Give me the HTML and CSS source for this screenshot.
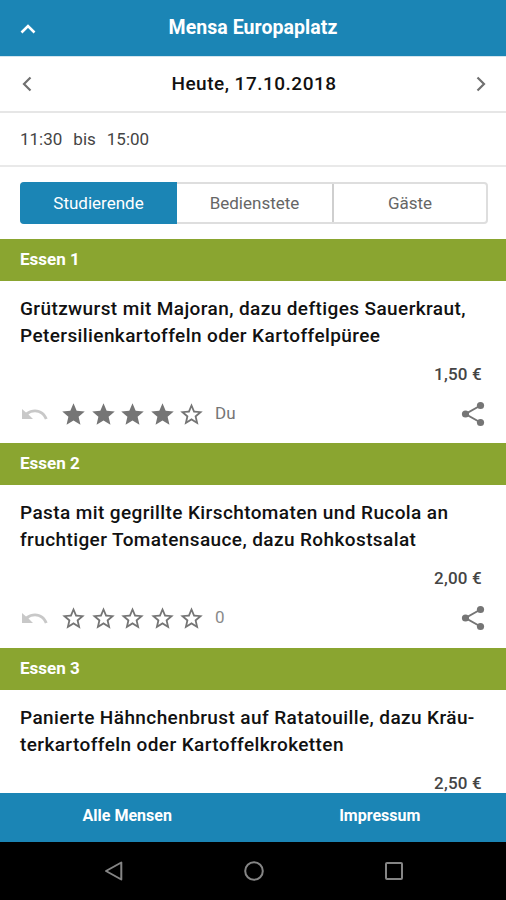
FILE: index.html
```html
<!DOCTYPE html>
<html lang="de">
<head>
<meta charset="utf-8">
<title>Mensa Europaplatz</title>
<link rel="stylesheet" href="styles.css">
</head>
<body>
<svg class="defs" aria-hidden="true">
  <symbol id="star" viewBox="0 0 24 24"><path d="M12 17.27L18.18 21l-1.64-7.03L22 9.24l-7.19-.61L12 2 9.19 8.63 2 9.24l5.46 4.73L5.82 21z"/></symbol>
  <symbol id="star-outline" viewBox="0 0 24 24"><path d="M22 9.24l-7.19-.62L12 2 9.19 8.63 2 9.24l5.46 4.73L5.82 21 12 17.27 18.18 21l-1.63-7.03L22 9.24zM12 15.4l-3.76 2.27 1-4.28-3.32-2.88 4.38-.38L12 6.1l1.71 4.04 4.38.38-3.32 2.88 1 4.28L12 15.4z"/></symbol>
  <symbol id="undo" viewBox="0 0 26 11"><path d="M0 0l4 3.4C6.800 1.300 10 .4 13 .4c6 0 10.600 3.700 12.600 9.200l-2.700 .9C21.300 6.300 17.600 3.300 13 3.300c-2.600 0-4.700 .8-6.500 2.200L11 10H0z"/></symbol>
  <symbol id="share" viewBox="0 0 24 26"><path d="M19.500 4.500L4.500 13 19.500 21.500" fill="none" stroke="currentColor" stroke-width="2"/><circle cx="19.500" cy="4.500" r="3.600"/><circle cx="4.500" cy="13" r="3.600"/><circle cx="19.500" cy="21.500" r="3.600"/></symbol>
</svg>
<div class="app">
  <header class="bar">
    <svg class="up" viewBox="0 0 16 10"><path d="M1.500 8.500L8 2l6.500 6.500"/></svg>
    <h1>Mensa Europaplatz</h1>
  </header>
  <nav class="date">
    <svg class="chev" viewBox="0 0 10 16"><path d="M8.500 1.500L2 8l6.500 6.500"/></svg>
    <span>Heute, 17.10.2018</span>
    <svg class="chev" viewBox="0 0 10 16"><path d="M1.500 1.500L8 8l-6.500 6.500"/></svg>
  </nav>
  <div class="hours"><span>11:30</span><span>bis</span><span>15:00</span></div>
  <div class="groups">
    <div class="segments">
      <button class="active">Studierende</button><button>Bedienstete</button><button>Gäste</button>
    </div>
  </div>
  <main>
    <section class="meal">
      <h2>Essen 1</h2>
      <p class="dish">Grützwurst mit Majoran, dazu deftiges Sauerkraut,<br>Petersilienkartoffeln oder Kartoffelpüree</p>
      <div class="price">1,50 €</div>
      <div class="actions">
        <svg class="undo"><use href="#undo"/></svg>
        <div class="stars"><svg><use href="#star"/></svg><svg><use href="#star"/></svg><svg><use href="#star"/></svg><svg><use href="#star"/></svg><svg><use href="#star-outline"/></svg></div>
        <span class="votes">Du</span>
        <svg class="share"><use href="#share"/></svg>
      </div>
    </section>
    <section class="meal">
      <h2>Essen 2</h2>
      <p class="dish">Pasta mit gegrillte Kirschtomaten und Rucola an<br>fruchtiger Tomatensauce, dazu Rohkostsalat</p>
      <div class="price">2,00 €</div>
      <div class="actions">
        <svg class="undo"><use href="#undo"/></svg>
        <div class="stars"><svg><use href="#star-outline"/></svg><svg><use href="#star-outline"/></svg><svg><use href="#star-outline"/></svg><svg><use href="#star-outline"/></svg><svg><use href="#star-outline"/></svg></div>
        <span class="votes zero">0</span>
        <svg class="share"><use href="#share"/></svg>
      </div>
    </section>
    <section class="meal">
      <h2>Essen 3</h2>
      <p class="dish">Panierte Hähnchenbrust auf Ratatouille, dazu Kräu-<br>terkartoffeln oder Kartoffelkroketten</p>
      <div class="price">2,50 €</div>
    </section>
  </main>
  <footer class="tabs"><a>Alle Mensen</a><a>Impressum</a></footer>
  <div class="system">
    <svg viewBox="0 0 20 20"><path d="M17.300 1.500v17L2 10z"/></svg>
    <svg viewBox="0 0 20 20"><circle cx="10" cy="10" r="8.800"/></svg>
    <svg viewBox="0 0 20 20"><rect x="2" y="2" width="16" height="16" rx="1"/></svg>
  </div>
</div>
</body>
</html>
```
FILE: styles.css
```css
* { box-sizing: border-box; }
body { margin: 0; background: #fff; font-family: Roboto, "Liberation Sans", sans-serif; }
h1, h2, p { margin: 0; }
svg { display: block; flex: none; fill: currentColor; }
.defs { display: none; }
.app { display: flex; flex-direction: column; width: 506px; height: 900px; overflow: hidden; }

.bar { flex: none; display: grid; grid-template-columns: 16px 1fr 16px; align-items: center; height: 56px; padding: 0 20px; background: #1b85b5; color: #fff; }
.bar h1 { font-size: 19.500px; line-height: 24px; font-weight: 700; text-align: center; letter-spacing: 0.060px; }
.up { width: 16px; height: 10px; fill: none; stroke: #fff; stroke-width: 2.600; margin-top: 2px; }

.date { flex: none; display: flex; align-items: center; justify-content: space-between; height: 57px; padding: 0 20px 0 22px; border-top: 1px solid #d3e5ee; border-bottom: 2px solid #e6e6e6; color: #111; font-size: 19px; font-weight: 500; letter-spacing: 0.5px; }
.date span { padding-bottom: 2px; }
.chev { width: 10px; height: 16px; fill: none; stroke: #707070; stroke-width: 2.200; }

.hours { flex: none; display: flex; align-items: center; gap: 11px; height: 54px; padding: 0 20px 1px; border-bottom: 2px solid #e9e9e9; color: #444; font-size: 17px; }

.groups { flex: none; height: 72px; padding: 15px 18px 0 20px; }
.segments { display: grid; grid-template-columns: 155px 155px 1fr; height: 42px; border: 2px solid #dedede; border-radius: 4px; }
.segments button { margin: 0; padding: 0; border: 0; background: none; color: #666; font: 400 17px/36px Roboto, sans-serif; letter-spacing: 0; }
.segments button + button { border-left: 2px solid #cfcfcf; }
.segments button.active { margin: -2px 0 -2px -2px; border-radius: 4px 0 0 4px; background: #1b85b5; color: #fff; }
.segments button:nth-child(2) { border-left: 0; }

main { flex: 1; min-height: 0; overflow: hidden; }
.meal { height: 204.400px; }
.meal h2 { height: 42px; padding-left: 20px; background: #8aa530; color: #fff; font-size: 17px; line-height: 40px; font-weight: 700; letter-spacing: 0; }
.dish { padding: 14px 0 0 20px; color: #111; font-size: 19px; line-height: 27px; font-weight: 500; letter-spacing: 0.400px; white-space: nowrap; }
.price { margin-top: 14px; padding-right: 24px; text-align: right; color: #444; font-size: 17px; line-height: 22px; font-weight: 500; letter-spacing: 0.200px; }
.actions { display: flex; align-items: center; height: 58px; padding: 0 21px 0 22px; color: #757575; }
.undo { width: 26px; height: 11px; color: #c8c8c8; }
.stars { display: flex; gap: 2.500px; margin-left: 12px; }
.stars svg { width: 27px; height: 27px; }
.votes { margin-left: 10px; padding-bottom: 2px; font-size: 17px; line-height: 22px; }
.zero { color: #8a8a8a; }
.share { width: 24px; height: 26px; margin-left: auto; }

.tabs { flex: none; display: grid; grid-template-columns: 1fr 1fr; height: 49px; padding-left: 1px; background: #1b85b5; color: #fff; font-size: 16px; line-height: 46px; font-weight: 700; text-align: center; }
.system { flex: none; display: flex; justify-content: center; align-items: center; gap: 120px; height: 58px; padding-left: 1px; background: #000; }
.system svg { width: 20px; height: 20px; fill: none; stroke: #858585; stroke-width: 2; stroke-linejoin: round; }
```
